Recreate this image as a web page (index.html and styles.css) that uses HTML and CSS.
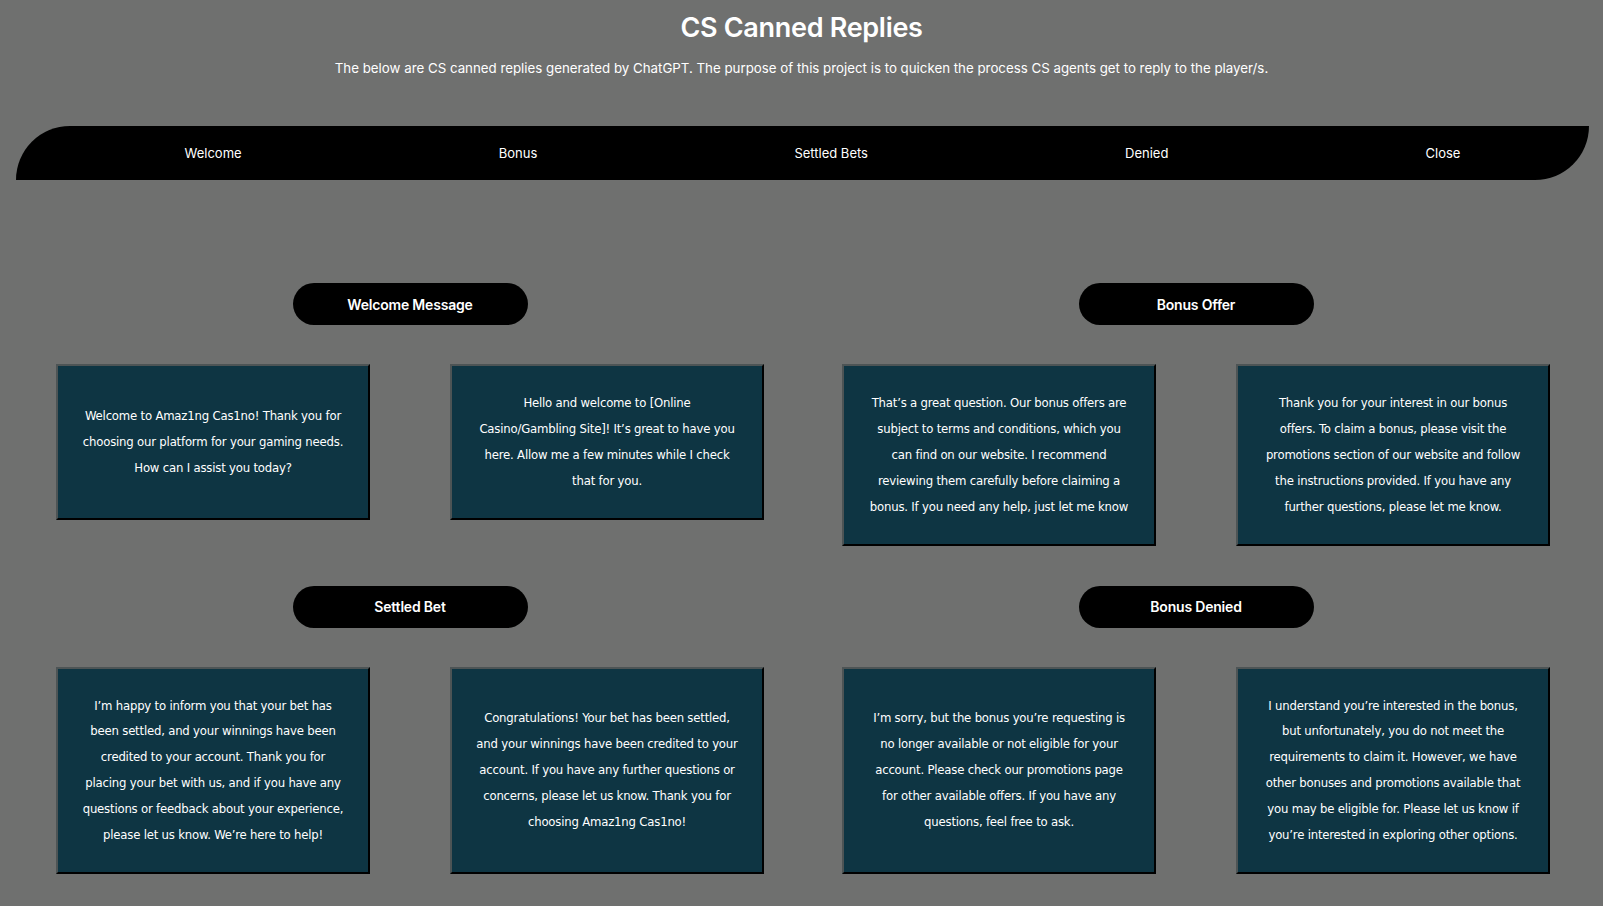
FILE: index.html
```html
<!DOCTYPE html>
<html lang="en">
<head>
<meta charset="utf-8">
<title>CS Canned Replies</title>
<link rel="stylesheet" href="styles.css">
</head>
<body>
<header class="header">
  <h1 class="title">CS Canned Replies</h1>
  <p class="subtitle">The below are CS canned replies generated by ChatGPT. The purpose of this project is to quicken the process CS agents get to reply to the player/s.</p>
</header>
<nav class="nav">
  <ul class="nav-list">
    <li class="nav-item">Welcome</li>
    <li class="nav-item">Bonus</li>
    <li class="nav-item">Settled Bets</li>
    <li class="nav-item">Denied</li>
    <li class="nav-item">Close</li>
  </ul>
</nav>
<main class="content">
  <div class="row">
    <section class="group">
      <div class="pill">Welcome Message</div>
      <div class="cards">
        <div class="card"><p>Welcome to Amaz1ng Cas1no! Thank you for choosing our platform for your gaming needs. How can I assist you today?</p></div>
        <div class="card"><p>Hello and welcome to [Online Casino/Gambling Site]! It’s great to have you here. Allow me a few minutes while I check that for you.</p></div>
      </div>
    </section>
    <section class="group">
      <div class="pill">Bonus Offer</div>
      <div class="cards">
        <div class="card"><p>That’s a great question. Our bonus offers are subject to terms and conditions, which you can find on our website. I recommend reviewing them carefully before claiming a bonus. If you need any help, just let me know</p></div>
        <div class="card"><p>Thank you for your interest in our bonus offers. To claim a bonus, please visit the promotions section of our website and follow the instructions provided. If you have any further questions, please let me know.</p></div>
      </div>
    </section>
  </div>
  <div class="row">
    <section class="group">
      <div class="pill">Settled Bet</div>
      <div class="cards">
        <div class="card"><p>I’m happy to inform you that your bet has been settled, and your winnings have been credited to your account. Thank you for placing your bet with us, and if you have any questions or feedback about your experience, please let us know. We’re here to help!</p></div>
        <div class="card"><p>Congratulations! Your bet has been settled, and your winnings have been credited to your account. If you have any further questions or concerns, please let us know. Thank you for choosing Amaz1ng Cas1no!</p></div>
      </div>
    </section>
    <section class="group">
      <div class="pill">Bonus Denied</div>
      <div class="cards">
        <div class="card"><p>I’m sorry, but the bonus you’re requesting is no longer available or not eligible for your account. Please check our promotions page for other available offers. If you have any questions, feel free to ask.</p></div>
        <div class="card"><p>I understand you’re interested in the bonus, but unfortunately, you do not meet the requirements to claim it. However, we have other bonuses and promotions available that you may be eligible for. Please let us know if you’re interested in exploring other options.</p></div>
      </div>
    </section>
  </div>
</main>
</body>
</html>
```
FILE: styles.css
```css
* { box-sizing: border-box; }
html, body { margin: 0; padding: 0; }
body {
  background: #6f706f;
  color: #ffffff;
  font-family: "Inter", "Noto Sans", sans-serif;
  height: 906px;
  overflow: hidden;
}
.header {
  text-align: center;
  padding-top: 12px;
}
.title {
  margin: 0;
  font-size: 27px;
  font-weight: 600;
  line-height: 32px;
  letter-spacing: -0.3px;
}
.subtitle {
  margin: 15px 0 0;
  font-size: 13.3px;
  line-height: 18px;
}
.nav {
  margin: 49px 14px 0 16px;
  height: 54px;
  background: #000;
  border-radius: 54px 0 54px 0;
}
.nav-list {
  list-style: none;
  margin: 0;
  padding: 0 0 0 40px;
  height: 100%;
  display: flex;
  align-items: center;
  justify-content: space-around;
}
.nav-item {
  font-size: 13px;
  color: #fff;
}
.content {
  padding: 103px 53px 0 56px;
  display: flex;
  flex-direction: column;
  gap: 40px;
}
.row {
  display: flex;
  align-items: flex-start;
  gap: 78px;
}
.group {
  display: flex;
  flex-direction: column;
  align-items: center;
  gap: 39px;
}
.pill {
  width: 235px;
  height: 42px;
  border-radius: 21px;
  background: #000;
  display: flex;
  align-items: center;
  justify-content: center;
  font-size: 14px;
  font-weight: 600;
  letter-spacing: -0.2px;
}
.cards {
  display: flex;
  gap: 80px;
  align-items: stretch;
}
.card {
  width: 314px;
  background: #0e3543;
  border-style: solid;
  border-width: 2px;
  border-color: #4d5455 #000 #000 #4d5455;
  padding: 24px 22px;
  display: flex;
  align-items: center;
  justify-content: center;
  text-align: center;
}
.card p {
  margin: 0;
  font-family: "Liberation Sans Narrow", "Arial Narrow", "DejaVu Sans Condensed", "Liberation Sans", sans-serif;
  font-stretch: condensed;
  font-size: 13px;
  letter-spacing: -0.2px;
  line-height: 25.9px;
}
```
